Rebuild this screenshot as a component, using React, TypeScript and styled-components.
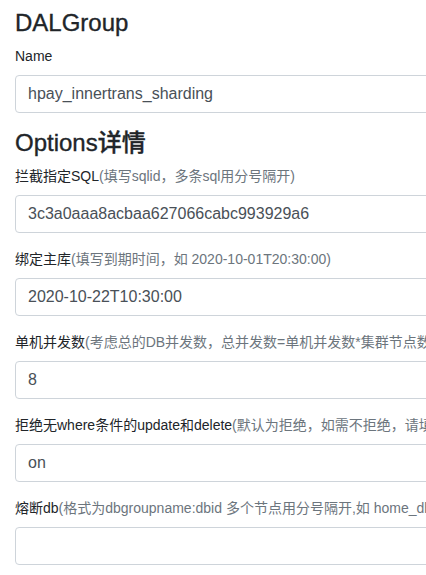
import React from "react";
import styled, { createGlobalStyle } from "styled-components";

const Global = createGlobalStyle`
  html, body { margin: 0; padding: 0; background: #fff; overflow: hidden; }
  body {
    font-family: "Liberation Sans", "Noto Sans CJK SC", sans-serif;
    color: #212529;
    font-size: 16px;
    line-height: 1.5;
  }
`;

const Page = styled.div`
  width: 760px;
  padding: 9px 15px 0 15px;
`;

const Heading = styled.h4`
  margin: 0 0 8px 0;
  font-size: 24px;
  font-weight: 500;
  line-height: 1.2;
  color: #212529;
  -webkit-text-stroke: 0.35px #212529;
`;

const Group = styled.div`
  margin-bottom: 16px;
`;

const Label = styled.label`
  display: block;
  margin-bottom: 8px;
  font-size: 14px;
  line-height: 21px;
  white-space: nowrap;
  color: #212529;
`;

const Hint = styled.span`
  color: #6c757d;
`;

const Input = styled.input`
  display: block;
  box-sizing: border-box;
  width: 100%;
  height: 38px;
  padding: 6px 12px;
  font-family: inherit;
  font-size: 16px;
  line-height: 1.5;
  color: #495057;
  background: #fff;
  border: 1px solid #ced4da;
  border-radius: 4px;
  outline: none;
`;

const fields = [
  { label: "拦截指定SQL", hint: "(填写sqlid，多条sql用分号隔开)", value: "3c3a0aaa8acbaa627066cabc993929a6" },
  { label: "绑定主库", hint: "(填写到期时间，如 2020-10-01T20:30:00)", value: "2020-10-22T10:30:00" },
  { label: "单机并发数", hint: "(考虑总的DB并发数，总并发数=单机并发数*集群节点数)", value: "8" },
  { label: "拒绝无where条件的update和delete", hint: "(默认为拒绝，如需不拒绝，请填写off)", value: "on" },
  { label: "熔断db", hint: "(格式为dbgroupname:dbid 多个节点用分号隔开,如 home_db:1;home_db:2)", value: "" },
];

export default function App() {
  return (
    <>
      <Global />
      <Page>
        <Heading>DALGroup</Heading>
        <Group>
          <Label>Name</Label>
          <Input readOnly value="hpay_innertrans_sharding" />
        </Group>
        <Heading>Options详情</Heading>
        {fields.map((f) => (
          <Group key={f.label}>
            <Label>
              {f.label}
              <Hint>{f.hint}</Hint>
            </Label>
            <Input readOnly value={f.value} />
          </Group>
        ))}
      </Page>
    </>
  );
}
